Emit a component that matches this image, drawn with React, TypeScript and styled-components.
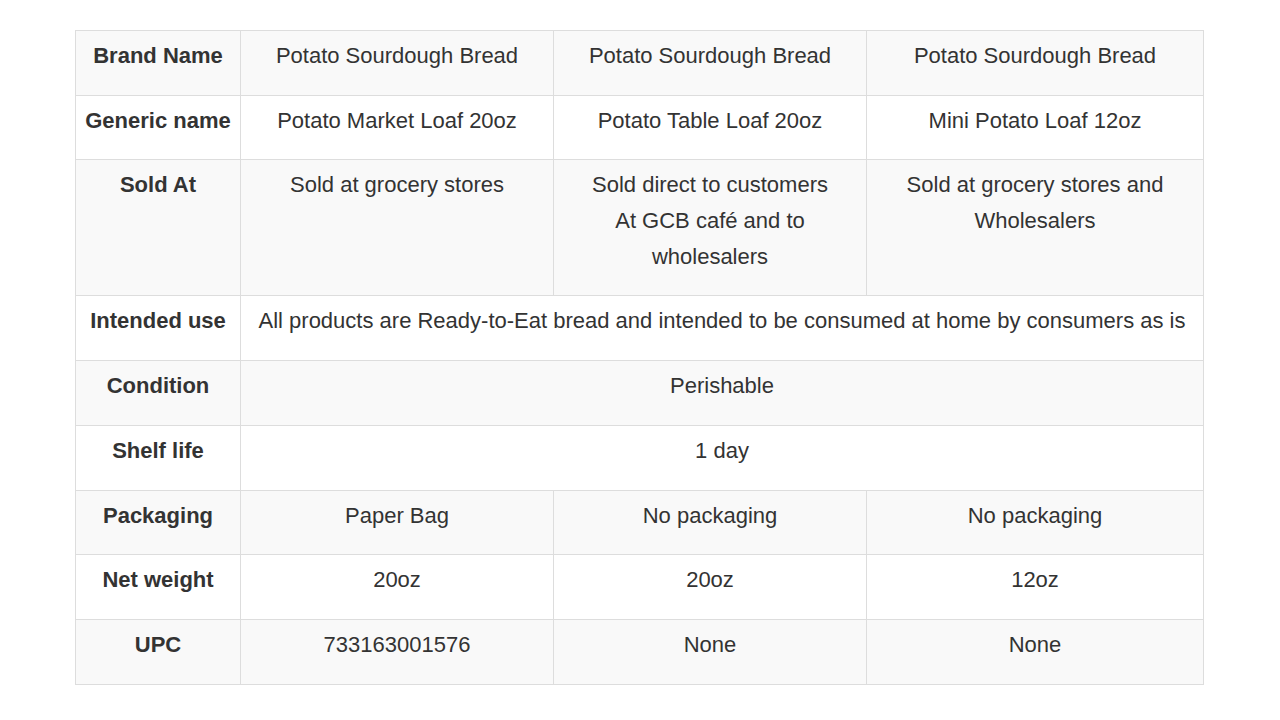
import { createGlobalStyle, styled } from 'styled-components';

const GlobalStyle = createGlobalStyle`
  html, body {
    margin: 0;
    padding: 0;
    background: #ffffff;
  }
  body {
    font-family: 'Liberation Sans', Arial, sans-serif;
    color: #333333;
  }
`;

const Page = styled.div`
  width: 1280px;
  height: 720px;
  padding: 30px 0 0 75px;
  box-sizing: border-box;
`;

const Table = styled.table`
  width: 1128px;
  border-collapse: collapse;
  table-layout: fixed;
  font-size: 22px;
  line-height: 35.6px;
`;

const Col = styled.col<{ $width: number }>`
  width: ${(p) => p.$width}px;
`;

const Row = styled.tr<{ $striped?: boolean }>`
  background-color: ${(p) => (p.$striped ? '#f9f9f9' : '#ffffff')};
`;

const Cell = styled.td`
  border: 1px solid #dddddd;
  padding: 7px 8px 21.15px;
  text-align: center;
  vertical-align: top;
  white-space: nowrap;
`;

const HeadCell = styled(Cell)`
  font-weight: bold;
  padding-left: 4px;
  padding-right: 4px;
`;

const Line = styled.div`
  display: block;
`;

type RowData = { label: string; cells: string[][] };

const COLUMNS = [165, 313, 313, 337];

const ROWS: RowData[] = [
  { label: 'Brand Name', cells: [['Potato Sourdough Bread'], ['Potato Sourdough Bread'], ['Potato Sourdough Bread']] },
  { label: 'Generic name', cells: [['Potato Market Loaf 20oz'], ['Potato Table Loaf 20oz'], ['Mini Potato Loaf 12oz']] },
  {
    label: 'Sold At',
    cells: [
      ['Sold at grocery stores'],
      ['Sold direct to customers', 'At GCB café and to', 'wholesalers'],
      ['Sold at grocery stores and', 'Wholesalers'],
    ],
  },
  {
    label: 'Intended use',
    cells: [['All products are Ready-to-Eat bread and intended to be consumed at home by consumers as is']],
  },
  { label: 'Condition', cells: [['Perishable']] },
  { label: 'Shelf life', cells: [['1 day']] },
  { label: 'Packaging', cells: [['Paper Bag'], ['No packaging'], ['No packaging']] },
  { label: 'Net weight', cells: [['20oz'], ['20oz'], ['12oz']] },
  { label: 'UPC', cells: [['733163001576'], ['None'], ['None']] },
];

function App() {
  return (
    <Page>
      <GlobalStyle />
      <Table>
        <colgroup>
          {COLUMNS.map((w, i) => (
            <Col key={i} $width={w} />
          ))}
        </colgroup>
        <tbody>
          {ROWS.map((row, i) => (
            <Row key={row.label} $striped={i % 2 === 0}>
              <HeadCell>{row.label}</HeadCell>
              {row.cells.map((lines, j) => (
                <Cell key={j} colSpan={row.cells.length === 1 ? 3 : 1}>
                  {lines.map((line, k) => (
                    <Line key={k}>{line}</Line>
                  ))}
                </Cell>
              ))}
            </Row>
          ))}
        </tbody>
      </Table>
    </Page>
  );
}

export default App;
